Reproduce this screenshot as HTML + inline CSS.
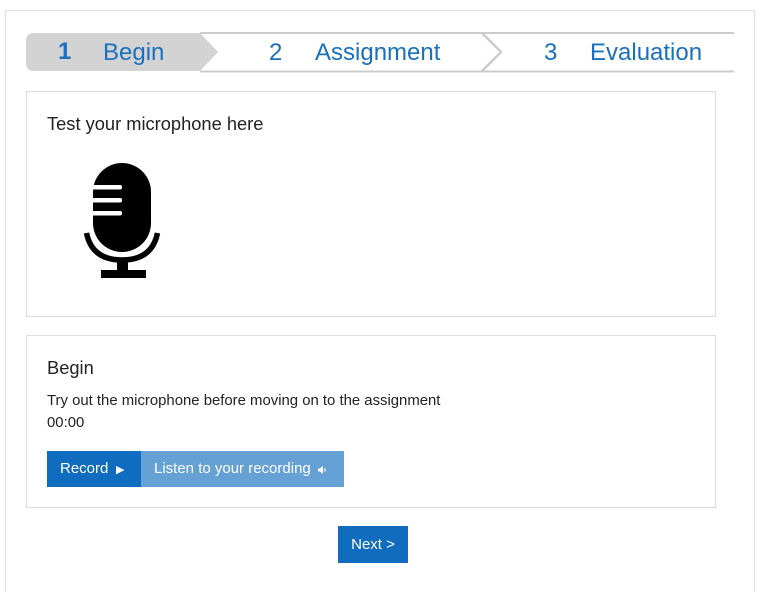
<!DOCTYPE html>
<html style="margin:0;width:762px;height:592px;overflow:hidden"><head><meta charset="utf-8"><style>
body{margin:0;width:762px;height:592px;background:#fff;font-family:"Liberation Sans",sans-serif;position:relative;overflow:hidden}
.frame{position:absolute;left:5px;top:10px;width:748px;height:582px;border:1px solid #ddd;border-bottom:none;box-sizing:content-box}
.box{position:absolute;left:26px;width:688px;border:1px solid #ddd;background:#fff}
.t{position:absolute;white-space:nowrap}
.blue{color:#1a6fbf}
.btn{position:absolute;color:#fff;font-size:15px;line-height:36px;height:36px}
</style></head><body>
<div class="frame"></div>
<svg style="position:absolute;left:0;top:0" width="762" height="80">
<path d="M34 33 H200 L218 52 L200 71 H34 Q26 71 26 63 V41 Q26 33 34 33Z" fill="#d3d3d3"/>
<line x1="200" y1="33" x2="734" y2="33" stroke="#ccc" stroke-width="2"/>
<line x1="200" y1="71.5" x2="734" y2="71.5" stroke="#ccc" stroke-width="2"/>
<path d="M482 33 L501 52 L482 71" fill="none" stroke="#ccc" stroke-width="2.5"/>
</svg>
<div class="t blue" style="left:58px;top:38px;font-size:24px;font-weight:bold">1</div>
<div class="t blue" style="left:103px;top:39px;font-size:24px">Begin</div>
<div class="t blue" style="left:269px;top:39px;font-size:24px">2</div>
<div class="t blue" style="left:315px;top:39px;font-size:24px">Assignment</div>
<div class="t blue" style="left:544px;top:39px;font-size:24px">3</div>
<div class="t blue" style="left:590px;top:39px;font-size:24px">Evaluation</div>

<div class="box" style="top:91px;height:224px"></div>
<div class="t" style="left:47px;top:113px;font-size:18.3px;color:#222">Test your microphone here</div>
<svg style="position:absolute;left:0;top:0" width="200" height="300">
<rect x="93" y="163" width="58" height="89" rx="29" fill="#000"/>
<rect x="91" y="185" width="31" height="4.5" rx="2" fill="#fff"/>
<rect x="91" y="198" width="31" height="4.5" rx="2" fill="#fff"/>
<rect x="91" y="211" width="31" height="4.5" rx="2" fill="#fff"/>
<path d="M86.5 233 Q92 260 122 260 Q152 260 157.5 233" fill="none" stroke="#000" stroke-width="5.5"/>
<rect x="117" y="258" width="11" height="14" fill="#000"/>
<path d="M101 270 H146 V278 H101Z" fill="#000"/>
</svg>

<div class="box" style="top:335px;height:171px"></div>
<div class="t" style="left:47px;top:357px;font-size:18.3px;color:#222">Begin</div>
<div class="t" style="left:47px;top:393px;font-size:14.9px;color:#222">Try out the microphone before moving on to the assignment</div>
<div class="t" style="left:47px;top:415px;font-size:14.9px;color:#222">00:00</div>
<div class="btn" style="left:47px;top:451px;width:94px;background:#0f6cbf"><span style="padding-left:13px">Record</span><span style="position:absolute;left:69px;top:1px;font-size:11px">&#9654;</span></div>
<div class="btn" style="left:141px;top:451px;width:203px;background:#66a1d6"><span style="padding-left:13px">Listen to your recording</span>
<svg style="position:absolute;left:176px;top:14px" width="10" height="10"><path d="M1 3.5H3L6 1V9L3 6.5H1Z" fill="#fff"/><path d="M7.5 3.5Q8.8 5 7.5 6.5" stroke="#fff" fill="none" stroke-width="1.2"/></svg></div>
<div class="btn" style="left:338px;top:526px;width:70px;height:37px;line-height:37px;background:#0f6cbf;text-align:center">Next &gt;</div>
</body></html>
